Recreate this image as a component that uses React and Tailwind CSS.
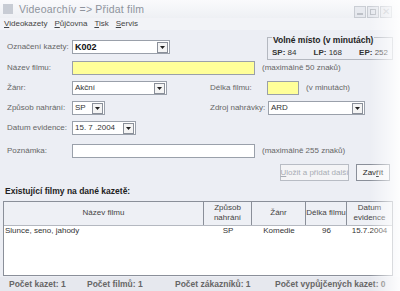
import React from 'react';

const Arrow = () => (
    <div className="w-[11px] h-[11px] border border-[#8a8f99] bg-[#f4f4f4] flex items-center justify-center">
        <svg width="5" height="3" viewBox="0 0 5 3"><path d="M0 0h5L2.5 3z" fill="#222" /></svg>
    </div>
);

const Select = ({ value, w, bold }) => (
    <div className={`h-[14px] border border-[#9aa0aa] bg-white flex items-center justify-between pl-[2px] pr-[1px] ${w}`}>
        <span className={bold ? 'font-bold text-[#111] text-[9px]' : 'text-[#333]'}>{value}</span>
        <Arrow />
    </div>
);

const Field = ({ w, yellow }) => (
    <div className={`h-[14px] border border-[#9aa0aa] ${yellow ? 'bg-[#ffff99]' : 'bg-white'} ${w}`}></div>
);

const Label = ({ children, w = 'w-[65px]' }) => (
    <div className={`${w} shrink-0 text-[#666]`}>{children}</div>
);

export default function App() {
    return (
        <div className="relative w-[400px] h-[291px] overflow-hidden bg-[#eceef4] text-[8px] leading-none whitespace-nowrap" style={{ fontFamily: '"Liberation Sans", Arial, sans-serif' }}>
            {/* Title bar */}
            <div className="h-[18px] bg-gradient-to-b from-[#fafafc] to-[#eef0f4] flex items-center pl-[3px]">
                <div className="w-[10px] h-[10px] bg-[#c8ccd4] mr-[6px]"></div>
                <span className="text-[10.5px] text-[#8e939c] tracking-[0.2px]">Videoarchív =&gt; Přidat film</span>
            </div>
            {/* Menu */}
            <div className="h-[12px] flex items-center gap-[7px] pl-[4px] text-[#444] bg-[#f2f3f7]">
                <span><u>V</u>ideokazety</span>
                <span><u>P</u>ůjčovna</span>
                <span><u>T</u>isk</span>
                <span><u>S</u>ervis</span>
            </div>

            <div className="pl-[7px] pr-[6px]">
                {/* Row 1 */}
                <div className="flex items-start mt-[7px] h-[22px]">
                    <div className="flex items-center mt-[3px]">
                        <Label>Označení kazety:</Label>
                        <Select value="K002" w="w-[98px]" bold />
                    </div>
                    <div className="ml-auto mr-[1px] relative border border-[#b4b8c0] w-[126px] h-[23px]">
                        <div className="absolute -top-[2px] left-[4px] font-bold text-[#222] bg-[#eceef4] px-[1px] text-[8.5px]">Volné místo (v minutách)</div>
                        <div className="flex justify-between px-[4px] pt-[11px] text-[#333]">
                            <span><b>SP:</b> 84</span>
                            <span><b>LP:</b> 168</span>
                            <span><b>EP:</b> 252</span>
                        </div>
                    </div>
                </div>
                {/* Row 2 */}
                <div className="flex items-center mt-[2px]">
                    <Label>Název filmu:</Label>
                    <Field w="w-[183px]" yellow />
                    <span className="ml-[7px] text-[#666]">(maximálně 50 znaků)</span>
                </div>
                {/* Row 3 */}
                <div className="flex items-center mt-[6px]">
                    <Label>Žánr:</Label>
                    <Select value="Akční" w="w-[95px]" />
                    <Label w="w-[57px] ml-[43px]">Délka filmu:</Label>
                    <Field w="w-[32px]" yellow />
                    <span className="ml-[7px] text-[#666]">(v minutách)</span>
                </div>
                {/* Row 4 */}
                <div className="flex items-center mt-[6px]">
                    <Label>Způsob nahrání:</Label>
                    <Select value="SP" w="w-[33px]" />
                    <Label w="w-[58px] ml-[105px]">Zdroj nahrávky:</Label>
                    <Select value="ARD" w="w-[97px]" />
                </div>
                {/* Row 5 */}
                <div className="flex items-center mt-[6px]">
                    <Label>Datum evidence:</Label>
                    <Select value="15. 7 .2004" w="w-[64px]" />
                </div>
                {/* Row 6 */}
                <div className="flex items-center mt-[9px]">
                    <Label>Poznámka:</Label>
                    <Field w="w-[183px]" />
                    <span className="ml-[7px] text-[#666]">(maximálně 255 znaků)</span>
                </div>
                {/* Buttons */}
                <div className="flex justify-end gap-[7px] mt-[6px] mr-[4px]">
                    <div className="h-[17px] w-[69px] border border-[#b8bcc4] bg-[#f4f4f6] text-[#a8acb4] flex items-center justify-center"><span><u>U</u>ložit a přidat další</span></div>
                    <div className="h-[17px] w-[34px] border border-[#8a8f99] bg-[#f6f6f8] text-[#222] flex items-center justify-center"><span>Zav<u>ř</u>ít</span></div>
                </div>
                <div className="font-bold text-[#222] mt-[6px] -ml-[2px] text-[8.5px]">Existující filmy na dané kazetě:</div>
            </div>

            {/* Table */}
            <div className="mx-[3px] mt-[5px] h-[75px] w-[390px] border border-[#8a8f99] bg-white">
                <div className="flex h-[24px] bg-[#eef0f5] border-b border-[#b4b8c0] text-[#444] text-center">
                    <div className="w-[200px] flex items-center justify-center border-r border-[#8a8f99]">Název filmu</div>
                    <div className="w-[48px] flex items-center justify-center border-r border-[#8a8f99] leading-[10px]">Způsob<br />nahrání</div>
                    <div className="w-[54px] flex items-center justify-center border-r border-[#8a8f99]">Žánr</div>
                    <div className="w-[41px] flex items-center justify-center border-r border-[#8a8f99]">Délka filmu</div>
                    <div className="flex-1 flex items-center justify-center leading-[10px]">Datum<br />evidence</div>
                </div>
                <div className="flex h-[11px] items-center text-[#333]">
                    <div className="w-[200px] pl-[1px]">Slunce, seno, jahody</div>
                    <div className="w-[48px] text-center">SP</div>
                    <div className="w-[54px] text-center">Komedie</div>
                    <div className="w-[41px] text-center">96</div>
                    <div className="flex-1 text-center">15.7.2004</div>
                </div>
            </div>

            {/* Status bar */}
            <div className="flex items-center h-[16px] mt-[1px] text-[#666] font-bold bg-[#e6e8ee] text-[8.5px]">
                <span className="ml-[9px] w-[78px]">Počet kazet: 1</span>
                <span className="w-[88px]">Počet filmů: 1</span>
                <span className="w-[100px]">Počet zákazníků: 1</span>
                <span>Počet vypůjčených kazet: 0</span>
            </div>

            {/* Window controls */}
            <div className="absolute top-[6px] right-[8px] flex gap-[1px] opacity-50">
                <div className="w-[12px] h-[12px] border border-[#a0a6b0] bg-[#dde0e8] flex items-center justify-center"><div className="w-[6px] h-[2px] bg-[#8a909a] mt-[3px]"></div></div>
                <div className="w-[12px] h-[12px] border border-[#a0a6b0] bg-[#dde0e8] flex items-center justify-center"><div className="w-[6px] h-[6px] border border-[#8a909a]"></div></div>
                <div className="w-[12px] h-[12px] border border-[#a0a6b0] bg-[#dde0e8] flex items-center justify-center text-[#8a909a] text-[10px]">✕</div>
            </div>

            {/* Fade overlay on right edge */}
            <div className="pointer-events-none absolute inset-y-0 right-0 w-[30px] bg-gradient-to-r from-transparent to-white/90"></div>
        </div>
    );
}
